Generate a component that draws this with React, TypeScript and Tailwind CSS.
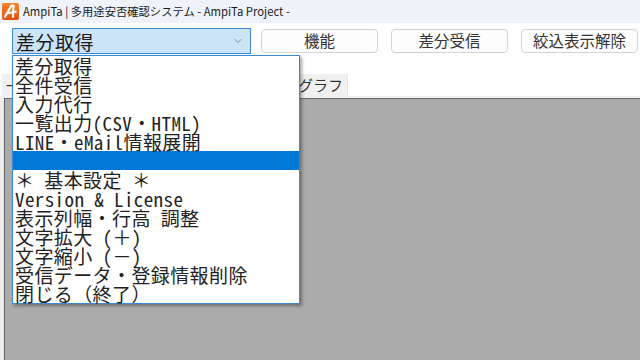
import { ChevronDown } from "lucide-react";

const menuItems = [
  "差分取得",
  "全件受信",
  "入力代行",
  "一覧出力(CSV・HTML)",
  "LINE・eMail情報展開",
  "",
  "＊ 基本設定 ＊",
  "Version & License",
  "表示列幅・行高 調整",
  "文字拡大 (＋)",
  "文字縮小 (－)",
  "受信データ・登録情報削除",
  "閉じる（終了）",
];

const buttons = ["機能", "差分受信", "絞込表示解除"];

const uiFont = "font-['Noto_Sans_CJK_JP','Noto_Sans',sans-serif]";

const Logo = () => (
  <svg width="17" height="17" viewBox="0 0 17 17">
    <defs>
      <linearGradient id="lg" x1="0" y1="0" x2="0" y2="1">
        <stop offset="0" stopColor="#f7832c" />
        <stop offset="1" stopColor="#e2520f" />
      </linearGradient>
    </defs>
    <rect x="0" y="0" width="17" height="17" rx="2" fill="url(#lg)" />
    <path d="M2.5 14.5 L9.5 2.5 L11.5 2.5 L11 14.5" fill="none" stroke="#fff" strokeWidth="2.2" strokeLinejoin="round" />
    <path d="M4.5 10.5 L14.5 8.5" stroke="#fff" strokeWidth="2" />
  </svg>
);

export default function App() {
  return (
    <div className={`relative w-[640px] h-[360px] overflow-hidden bg-white ${uiFont}`}>
      {/* title bar */}
      <div className="h-[23px] bg-[#eef3fa] flex items-center pl-[2px] gap-[4px]">
        <Logo />
        <span className="text-[11.3px] leading-none text-[#1a1a1a]">
          AmpiTa | 多用途安否確認システム - AmpiTa Project -
        </span>
      </div>

      {/* toolbar */}
      <div className="flex items-start pt-[5px] pl-[12px] h-[51px]">
        <div className="w-[239px] h-[26px] bg-[#cce4f7] border border-[#3b8ad6] flex items-center pl-[3px] pr-[6px]">
          <span className="flex-1 text-[19px] leading-none text-[#1a1a1a] tracking-[0.5px]">差分取得</span>
          <ChevronDown size={12} strokeWidth={1.5} className="text-[#6b6b6b]" />
        </div>
        <div className="flex gap-[13px] ml-[10px] mt-[1px]">
          {buttons.map((b) => (
            <div
              key={b}
              className="w-[117px] h-[24px] rounded-[4px] border border-[#d3d3d3] bg-[#fdfdfd] flex items-center justify-center text-[15.5px] leading-none text-[#333]"
            >
              {b}
            </div>
          ))}
        </div>
      </div>

      {/* tab strip */}
      <div className="flex h-[22px] items-end pl-[2px]">
        <div className="h-[22px] w-[120px] bg-[#f0f0f0] pl-[4px] text-[14px] leading-[22px] text-[#333]">一覧表示</div>
        <div className="h-[22px] w-[166px]" />
        <div className="h-[22px] w-[60px] bg-[#f0f0f0] border-r border-[#e4e4e4] text-[15px] leading-[22px] text-[#333] text-right pr-[4px]">
          グラフ
        </div>
      </div>

      {/* tab panel */}
      <div className="h-[2px] bg-[#f0f0f0]" />
      <div className="flex h-[264px]">
        <div className="w-[4px] bg-[#f0f0f0] border-r border-[#e0e0e0]" />
        <div className="flex-1 bg-[#ababab] border-t border-l border-[#696969]" />
      </div>

      {/* open combobox list */}
      <div className="absolute left-[12px] top-[55px] w-[288px] bg-white border border-[#3b8ad6] shadow-[2px_2px_3px_rgba(0,0,0,0.35)] font-['Noto_Sans_Mono_CJK_JP','Noto_Sans_CJK_JP',monospace]">
        {menuItems.map((item, i) => (
          <div
            key={i}
            className={`h-[19px] pl-[2px] text-[19px] tracking-[0.4px] leading-[19px] whitespace-pre text-[#222] ${item === "" ? "bg-[#0078d7]" : ""}`}
          >
            {item}
          </div>
        ))}
      </div>
    </div>
  );
}
